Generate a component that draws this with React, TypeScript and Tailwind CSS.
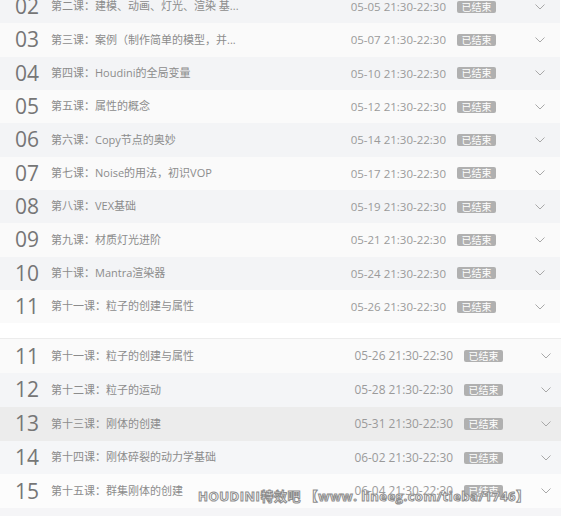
import React from 'react';

interface Lesson {
  no: string;
  title: string;
  date: string;
}

const topLessons: Lesson[] = [
  { no: '02', title: '第二课：建模、动画、灯光、渲染 基...', date: '05-05 21:30-22:30' },
  { no: '03', title: '第三课：案例（制作简单的模型，并...', date: '05-07 21:30-22:30' },
  { no: '04', title: '第四课：Houdini的全局变量', date: '05-10 21:30-22:30' },
  { no: '05', title: '第五课：属性的概念', date: '05-12 21:30-22:30' },
  { no: '06', title: '第六课：Copy节点的奥妙', date: '05-14 21:30-22:30' },
  { no: '07', title: '第七课：Noise的用法，初识VOP', date: '05-17 21:30-22:30' },
  { no: '08', title: '第八课：VEX基础', date: '05-19 21:30-22:30' },
  { no: '09', title: '第九课：材质灯光进阶', date: '05-21 21:30-22:30' },
  { no: '10', title: '第十课：Mantra渲染器', date: '05-24 21:30-22:30' },
  { no: '11', title: '第十一课：粒子的创建与属性', date: '05-26 21:30-22:30' },
];

const bottomLessons: Lesson[] = [
  { no: '11', title: '第十一课：粒子的创建与属性', date: '05-26 21:30-22:30' },
  { no: '12', title: '第十二课：粒子的运动', date: '05-28 21:30-22:30' },
  { no: '13', title: '第十三课：刚体的创建', date: '05-31 21:30-22:30' },
  { no: '14', title: '第十四课：刚体碎裂的动力学基础', date: '06-02 21:30-22:30' },
  { no: '15', title: '第十五课：群集刚体的创建', date: '06-04 21:30-22:30' },
  { no: '16', title: '第十六课：', date: '06-07 21:30-22:30' },
];

const Chevron = () => (
  <svg width="10" height="6" viewBox="0 0 10 6" fill="none" stroke="#a8a8a8" strokeWidth="1">
    <path d="M0.5 0.5 L5 5 L9.5 0.5" />
  </svg>
);

const Badge = () => (
  <span className="inline-flex items-center justify-center w-[39px] h-[12px] rounded-[2px] bg-[#b0b0b0] text-white text-[10px] leading-none">
    已结束
  </span>
);

const TopRow = ({ lesson, bg }: { lesson: Lesson; bg: string }) => (
  <div className={`flex items-center h-[33.33px] pl-[15px] pr-[15px] ${bg}`}>
    <span className="w-[36px] shrink-0 text-[21px] leading-none text-[#767676]">{lesson.no}</span>
    <span className="flex-1 min-w-0 truncate text-[11px] text-[#8c8c8c]">{lesson.title}</span>
    <span className="shrink-0 text-[11.5px] text-[#9a9a9a]">{lesson.date}</span>
    <span className="ml-[11px] shrink-0 flex"><Badge /></span>
    <span className="ml-[39px] shrink-0 flex"><Chevron /></span>
  </div>
);

const BottomRow = ({ lesson, bg }: { lesson: Lesson; bg: string }) => (
  <div className={`flex items-center h-[33.8px] pl-[15px] pr-[10px] ${bg}`}>
    <span className="w-[36px] shrink-0 text-[21px] leading-none text-[#767676]">{lesson.no}</span>
    <span className="flex-1 min-w-0 truncate text-[11px] text-[#8c8c8c]">{lesson.title}</span>
    <span className="shrink-0 text-[11.9px] text-[#9a9a9a]">{lesson.date}</span>
    <span className="ml-[11px] shrink-0 flex"><Badge /></span>
    <span className="ml-[38px] shrink-0 flex"><Chevron /></span>
  </div>
);

const bottomBgs = ['bg-[#fafafa]', 'bg-[#f4f5f7]', 'bg-[#ececec]', 'bg-[#f5f6f8]', 'bg-[#fcfcfc]', 'bg-[#f5f5f7]'];

export default function App() {
  return (
    <div
      className="relative w-[567px] h-[516px] overflow-hidden bg-white"
      style={{ fontFamily: '"Open Sans", "Noto Sans CJK SC", sans-serif' }}
    >
      <div className="w-[560px] -mt-[10px]">
        {topLessons.map((l, i) => (
          <TopRow key={l.no} lesson={l} bg={i % 2 === 0 ? 'bg-[#f3f4f6]' : 'bg-[#fafafa]'} />
        ))}
      </div>
      <div className="w-[561px] mt-[15px] border-t border-[#ececec]">
        {bottomLessons.map((l, i) => (
          <BottomRow key={l.no} lesson={l} bg={bottomBgs[i]} />
        ))}
      </div>
      <span className="absolute left-[198px] top-[487px] text-[13px] font-bold tracking-[0.5px] text-white [-webkit-text-stroke:1px_#8c8c8c] whitespace-nowrap">
        HOUDINI特效吧 【www. lineeg.com/tieba/1746】
      </span>
    </div>
  );
}
